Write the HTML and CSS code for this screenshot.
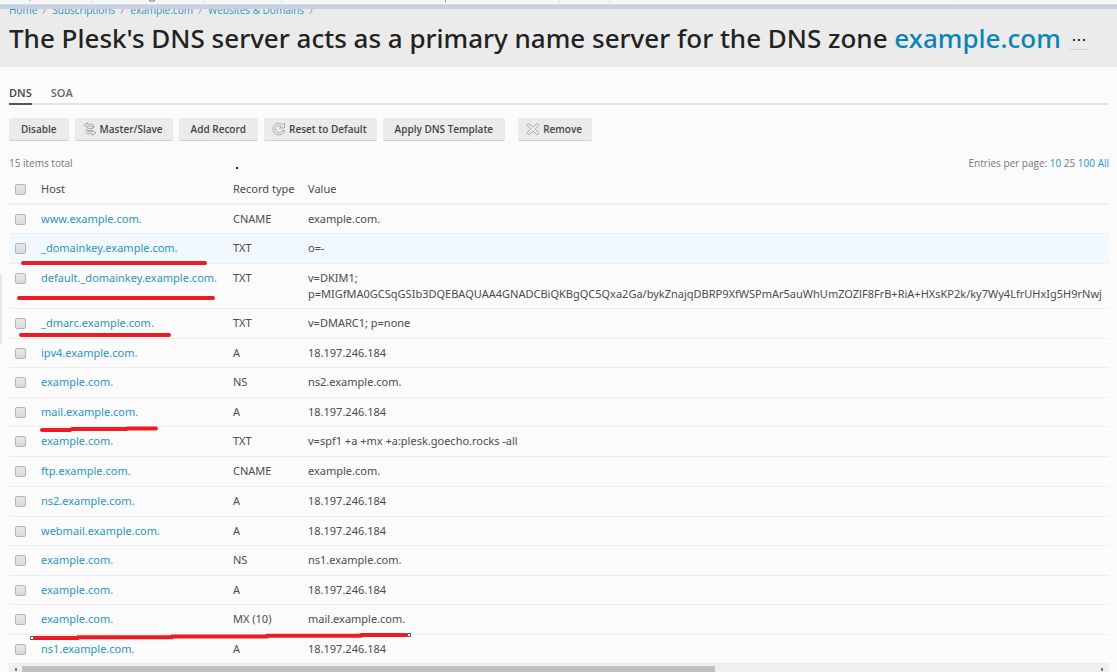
FILE: index.html
```html
<!DOCTYPE html>
<html lang="en">
<head>
<meta charset="utf-8">
<title>DNS Settings</title>
<link rel="stylesheet" href="styles.css">
</head>
<body>
<div class="window-edge">
  <svg width="1000" height="4" aria-hidden="true">
    <path d="M91.500 0V2M204.500 0V2M281.500 0V2M559.500 0V2M609.500 0V2M957.500 0V2" stroke="#dcdfe4"/>
    <path d="M30 0V1M445.500 0V2" stroke="#b08a60"/><path d="M149 .5Q152 2 155 .5" fill="none" stroke="#777"/>
  </svg>
</div>
<header class="page-head">
  <nav class="crumbs" aria-label="Breadcrumb">
    <a href="#">Home</a><i></i><a href="#">Subscriptions</a><i></i><a href="#">example.com</a><i></i><a href="#">Websites &amp; Domains</a><i></i>
  </nav>
  <div class="title-row">
    <h1>The Plesk's DNS server acts as a primary name server for the DNS zone <a href="#">example.com</a></h1>
    <button class="more" aria-label="More"><svg width="14" height="4" aria-hidden="true"><path d="M1 1h2v2h-2zM6 1h2v2h-2zM11 1h2v2h-2z" fill="#333"/></svg></button>
  </div>
</header>
<main>
  <nav class="tabs"><a class="tab active" href="#">DNS</a><a class="tab" href="#">SOA</a></nav>
  <div class="toolbar">
    <button class="btn">Disable</button>
    <button class="btn with-icon"><svg width="14" height="14" viewBox="0 0 14 14" aria-hidden="true"><path d="M4.500 .8 1 3.200 4.500 5.600V4.200H8.500Q9.500 4.200 9.500 5.500H11.200Q11.200 2.200 8.500 2.200H4.500ZM9.500 5.500 9.800 6.600H5.500Q3 6.600 3 9.500 3 11.800 5.500 11.800H9.500V13.200L13 10.800 9.500 8.400V9.800H6Q4.800 9.800 4.800 8.600H10"/></svg>Master/Slave</button>
    <button class="btn">Add Record</button>
    <button class="btn with-icon"><svg width="14" height="14" viewBox="0 0 14 14" aria-hidden="true"><path d="M12.500 1V6H7.500L9.300 4.300A3.600 3.600 0 1 0 10.300 8.500H12.600A5.900 5.900 0 1 1 10.900 2.700Z"/></svg>Reset to Default</button>
    <button class="btn">Apply DNS Template</button>
    <button class="btn with-icon apart"><svg width="14" height="14" viewBox="0 0 14 14" aria-hidden="true"><path d="M3 1.500 7 5 11 1.500 13 3.200 9.200 7 13 10.800 11 12.700 7 9.200 3 12.700 1 10.800 4.800 7 1 3.200Z"/></svg>Remove</button>
  </div>
  <div class="list-info">
    <span>15 items total</span>
    <span>Entries per page: <a href="#">10</a> 25 <a href="#">100</a> <a href="#">All</a></span>
  </div>
  <div class="table-wrap">
  <table>
    <thead><tr><th class="pick"><input type="checkbox" aria-label="Select all"></th><th class="host">Host</th><th class="type">Record type</th><th>Value</th></tr></thead>
    <tbody>
      <tr><td><input type="checkbox" aria-label="Select www"></td><td><a href="#">www.example.com.</a></td><td>CNAME</td><td>example.com.</td></tr>
      <tr class="hover"><td><input type="checkbox" aria-label="Select _domainkey"></td><td><a href="#">_domainkey.example.com.</a></td><td>TXT</td><td>o=-</td></tr>
      <tr><td><input type="checkbox" aria-label="Select default._domainkey"></td><td><a href="#">default._domainkey.example.com.</a></td><td>TXT</td><td>v=DKIM1;<br>p=MIGfMA0GCSqGSIb3DQEBAQUAA4GNADCBiQKBgQC5Qxa2Ga/bykZnajqDBRP9XfWSPmAr5auWhUmZOZlF8FrB+RiA+HXsKP2k/ky7Wy4LfrUHxIg5H9rNwj</td></tr>
      <tr><td><input type="checkbox" aria-label="Select _dmarc"></td><td><a href="#">_dmarc.example.com.</a></td><td>TXT</td><td>v=DMARC1; p=none</td></tr>
      <tr><td><input type="checkbox" aria-label="Select ipv4"></td><td><a href="#">ipv4.example.com.</a></td><td>A</td><td>18.197.246.184</td></tr>
      <tr><td><input type="checkbox" aria-label="Select ns2 record"></td><td><a href="#">example.com.</a></td><td>NS</td><td>ns2.example.com.</td></tr>
      <tr><td><input type="checkbox" aria-label="Select mail"></td><td><a href="#">mail.example.com.</a></td><td>A</td><td>18.197.246.184</td></tr>
      <tr><td><input type="checkbox" aria-label="Select SPF record"></td><td><a href="#">example.com.</a></td><td>TXT</td><td>v=spf1 +a +mx +a:plesk.goecho.rocks -all</td></tr>
      <tr class="tall"><td><input type="checkbox" aria-label="Select ftp"></td><td><a href="#">ftp.example.com.</a></td><td>CNAME</td><td>example.com.</td></tr>
      <tr><td><input type="checkbox" aria-label="Select ns2"></td><td><a href="#">ns2.example.com.</a></td><td>A</td><td>18.197.246.184</td></tr>
      <tr><td><input type="checkbox" aria-label="Select webmail"></td><td><a href="#">webmail.example.com.</a></td><td>A</td><td>18.197.246.184</td></tr>
      <tr><td><input type="checkbox" aria-label="Select ns1 record"></td><td><a href="#">example.com.</a></td><td>NS</td><td>ns1.example.com.</td></tr>
      <tr><td><input type="checkbox" aria-label="Select A record"></td><td><a href="#">example.com.</a></td><td>A</td><td>18.197.246.184</td></tr>
      <tr><td><input type="checkbox" aria-label="Select MX record"></td><td><a href="#">example.com.</a></td><td>MX (10)</td><td>mail.example.com.</td></tr>
      <tr><td><input type="checkbox" aria-label="Select ns1"></td><td><a href="#">ns1.example.com.</a></td><td>A</td><td>18.197.246.184</td></tr>
    </tbody>
  </table>
  </div>
  <div class="scroll"><span class="arrow-left"></span><span class="thumb"></span><span class="arrow-right"></span></div>
</main>
<div class="side-handle"></div>
<svg class="marks" width="420" height="672" aria-hidden="true">
  <g fill="none" stroke="#ed1c24" stroke-width="4" stroke-linecap="round" stroke-linejoin="round">
    <path d="M23 263H205M19 298H213M21 335H169M42 430H70L72 429H126L128 428.500H156"/>
    <path stroke-linecap="butt" d="M33 638H78V637.300H172V636.500H267V635.700H361V635H407"/>
  </g>
  <path d="M30.500 636.500h3v3h-3zM407.500 633.500h3v3h-3z" fill="#fff" stroke="#555"/>
  <path d="M236 167h2v2h-2z" fill="#222"/>
</svg>
</body>
</html>
```
FILE: styles.css
```css
* { box-sizing: border-box; }
body {
  margin: 0;
  height: 100vh;
  overflow: hidden;
  position: relative;
  background: #fbfbfb;
  color: #4c4c4c;
  font: 11px/16px "Open Sans", "Noto Sans", sans-serif;
}
a { color: #2a96c0; text-decoration: none; }
button { font: inherit; border: 0; margin: 0; }
.window-edge {
  position: relative;
  z-index: 1;
  height: 9px;
  overflow: hidden;
  background: #f5f6f8;
  border-bottom: 4px solid #c6d0e1;
  box-shadow: inset 0 -1px #dcdcdc;
}
.window-edge svg { display: block; }
.page-head { display: flow-root; height: 58px; padding: 0 9px; background: #ebebeb; }
.crumbs {
  display: flex;
  align-items: center;
  height: 16px;
  margin-top: -7px;
  font-size: 10px;
  line-height: 16px;
}
.crumbs i { width: 1px; height: 7px; margin: 0 7px; background: #aaa; transform: rotate(25deg); }
.title-row { display: flex; align-items: center; gap: 8px; height: 40px; }
h1 { margin: 0; font-family: "Noto Sans", "Open Sans", sans-serif; font-size: 26px; line-height: 36px; font-weight: 500; color: #222; white-space: nowrap; }
h1 a { color: #0a84b6; }
.more { display: flex; align-items: center; justify-content: center; width: 20px; height: 20px; margin-top: 4px; padding: 0; background: none; border-bottom: 1px solid #d0d0d0; }
main { padding: 16px 8px 0 9px; }
.tabs { display: flex; gap: 19px; border-bottom: 2px solid #e4e4e4; }
.tab { height: 22px; margin-bottom: -2px; line-height: 20px; font-weight: 600; color: #666; }
.tab.active { color: #444; border-bottom: 2px solid #555; }
.toolbar { display: flex; gap: 6px; margin-top: 13px; }
.btn {
  display: flex;
  align-items: center;
  gap: 3px;
  height: 23px;
  padding: 0 12px;
  background: #ebebeb;
  border-bottom: 1px solid #cfcfcf;
  border-radius: 2px;
  color: #444;
  font-size: 10px;
  font-weight: 600;
  white-space: nowrap;
}
.with-icon { padding: 0 10px 0 8px; }
.apart { margin-left: 7px; }
.btn svg { fill: none; stroke: #aaa; stroke-linejoin: round; }
.list-info { display: flex; justify-content: space-between; margin-top: 14px; font-size: 10px; color: #777; }
.table-wrap { overflow: hidden; }
table { width: 100%; table-layout: fixed; border-collapse: separate; border-spacing: 0; font-family: "Noto Sans", "Open Sans", sans-serif; }
th { height: 34px; padding: 4px 0 0; text-align: left; font-weight: 400; border-bottom: 2px solid #eee; }
.pick { width: 32px; }
.host { width: 192px; }
.type { width: 75px; }
td { padding: 6px 0; vertical-align: top; border-bottom: 1px solid #eee; white-space: nowrap; }
tr:nth-child(even) td, .tall td { padding-bottom: 7px; }
.hover td { background: #f1f8fe; }
input {
  appearance: none;
  display: block;
  width: 11px;
  height: 11px;
  margin: 3px 0 0 6px;
  border: 1px solid #b4b4b4;
  border-radius: 2px;
  background: linear-gradient(#e8e8e8, #dadada);
}
th input { margin-top: 0; }
.scroll { display: flex; align-items: center; height: 9px; background: #efefef; border-bottom: 1px solid #b8c3d3; }
.thumb { width: 63%; height: 6px; align-self: flex-end; background: #c1c1c1; }
.arrow-left { width: 13px; }
.arrow-left::before, .arrow-right::before { content: ""; display: block; width: 2px; height: 3px; margin: 3px 0 0 6px; background: #777; }
.arrow-right { margin-left: auto; width: 14px; }
.side-handle { position: absolute; left: 0; top: 274px; width: 2px; height: 70px; background: #e6e6e6; border-radius: 0 2px 2px 0; }
.marks { position: absolute; left: 0; top: 0; pointer-events: none; }
```
